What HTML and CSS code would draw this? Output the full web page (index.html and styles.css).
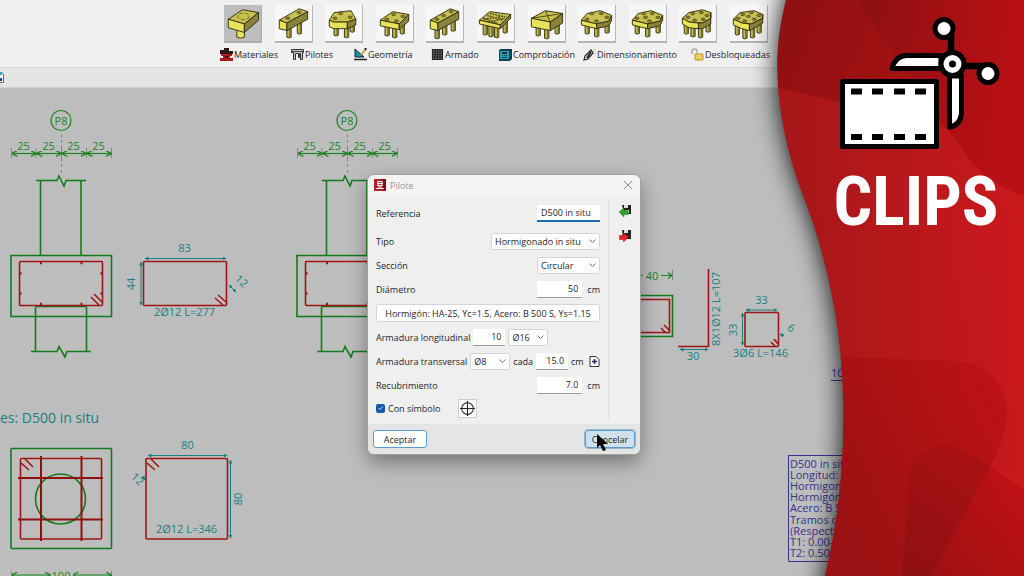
FILE: index.html
```html
<!DOCTYPE html>
<html lang="es">
<head>
<meta charset="utf-8">
<title>Pilote</title>
<link rel="stylesheet" href="styles.css">
</head>
<body>
<svg class="defs" aria-hidden="true">
  <defs>
    <g id="leg"><path class="side" d="M0 0h4.500v12q-2.200 1.500-4.500 0z"/><path class="shade" d="M2.500 0h2v12l-2 .5z"/></g>
    <g id="hole"><ellipse class="hole" rx="2.200" ry="1.300"/></g>
    <g id="cap-beam"><path class="top" d="M4 16L25 4l9 3-22 12z"/><path class="front" d="M4 16l8 3v8l-8-2z"/><path class="side" d="M12 19L34 7v8L12 27z"/></g>
    <g id="cap-box"><path class="top" d="M4 16L17 7l17 3-10 10z"/><path class="front" d="M4 16l20 4v6L4 22z"/><path class="side" d="M24 20l10-10v7L24 26z"/></g>
    <g id="cap-poly"><path class="top" d="M3 16l6-7 14-3 12 5-3 6-13 3z"/><path class="front" d="M3 16l16 4v5L3 21z"/><path class="side" d="M19 20l13-3 3-6v5l-3 6-13 3z"/></g>
  </defs>
</svg>

<div class="app">
  <header class="ribbon">
    <div class="caps">
      <button class="cap active" aria-label="Encepado de 1 pilote"><svg viewBox="0 0 38 38"><path class="front" d="M13 25v9q4 2 8 0v-9z"/><path class="top" d="M4 15L19 5l17 3-15 12z"/><path class="front" d="M4 15l17 5v9L4 24z"/><path class="side" d="M21 20L36 8v8L21 29z"/><ellipse class="ring" cx="20" cy="12" rx="6" ry="3.500"/></svg></button>
      <button class="cap" aria-label="Encepado de 2 pilotes"><svg viewBox="0 0 38 38"><use href="#leg" x="12" y="22"/><use href="#leg" x="23" y="18"/><use href="#cap-beam"/><use href="#hole" x="13" y="14"/><use href="#hole" x="25" y="8"/></svg></button>
      <button class="cap" aria-label="Encepado de 3 pilotes"><svg viewBox="0 0 38 38"><use href="#leg" x="9" y="20"/><use href="#leg" x="20" y="22"/><use href="#leg" x="26" y="16"/><path class="top" d="M4 16l5-8 18-2 5 9-9 3H9z"/><path class="front" d="M4 16l5 2h14v7H9l-5-2z"/><path class="side" d="M23 18l9-3v6l-9 4z"/><use href="#hole" x="10" y="14"/><use href="#hole" x="16" y="9"/><use href="#hole" x="26" y="13"/></svg></button>
      <button class="cap" aria-label="Encepado de 4 pilotes"><svg viewBox="0 0 38 38"><use href="#leg" x="9" y="20"/><use href="#leg" x="17" y="22"/><use href="#leg" x="25" y="18"/><use href="#cap-box"/><use href="#hole" x="11" y="15"/><use href="#hole" x="18" y="10"/><use href="#hole" x="28" y="12"/><use href="#hole" x="21" y="17"/></svg></button>
      <button class="cap" aria-label="Encepado lineal de 3 pilotes"><svg viewBox="0 0 38 38"><use href="#leg" x="9" y="23"/><use href="#leg" x="17" y="19"/><use href="#leg" x="26" y="15"/><use href="#cap-beam"/><use href="#hole" x="11" y="15"/><use href="#hole" x="18" y="11"/><use href="#hole" x="26" y="7"/></svg></button>
      <button class="cap" aria-label="Encepado en retícula"><svg viewBox="0 0 38 38"><use href="#leg" x="6" y="19"/><use href="#leg" x="12" y="21"/><use href="#leg" x="18" y="22"/><use href="#leg" x="27" y="17"/><path class="top" d="M2 16L13 7l22 3-11 11z"/><path class="front" d="M2 16l22 5v4L2 20z"/><path class="side" d="M24 21l11-11v4L24 25z"/><path class="grid" d="M7 15l21-3M11 18l18-4M6 14l15 5M10 11l17 5M13 9l18 4"/></svg></button>
      <button class="cap" aria-label="Encepado de 4 pilotes con diagonales"><svg viewBox="0 0 38 38"><use href="#leg" x="8" y="20"/><use href="#leg" x="17" y="23"/><use href="#leg" x="28" y="18"/><path class="top" d="M3 14L18 6l18 3-13 9z"/><path class="front" d="M3 14l20 4v9L3 23z"/><path class="side" d="M23 18l13-9v10l-13 8z"/><path class="thin" d="M3 14l33-5M18 6l5 12"/></svg></button>
      <button class="cap" aria-label="Encepado de 5 pilotes"><svg viewBox="0 0 38 38"><use href="#leg" x="7" y="18"/><use href="#leg" x="17" y="21"/><use href="#leg" x="28" y="17"/><use href="#cap-poly"/><use href="#hole" x="9" y="15"/><use href="#hole" x="14" y="9"/><use href="#hole" x="24" y="9"/><use href="#hole" x="30" y="13"/><use href="#hole" x="19" y="17"/></svg></button>
      <button class="cap" aria-label="Encepado de 6 pilotes"><svg viewBox="0 0 38 38"><use href="#leg" x="6" y="18"/><use href="#leg" x="17" y="21"/><use href="#leg" x="28" y="17"/><use href="#cap-poly"/><use href="#hole" x="8" y="14"/><use href="#hole" x="15" y="9"/><use href="#hole" x="24" y="9"/><use href="#hole" x="30" y="13"/><use href="#hole" x="21" y="17"/><use href="#hole" x="17" y="13"/></svg></button>
      <button class="cap" aria-label="Encepado de 7 pilotes"><svg viewBox="0 0 38 38"><use href="#leg" x="5" y="18"/><use href="#leg" x="12" y="21"/><use href="#leg" x="20" y="22"/><use href="#leg" x="28" y="16"/><path class="top" d="M3 14l7-6 14-3 9 3v6l-9 5-14-1z"/><path class="front" d="M3 14l7 4 10 1v6l-10-1-7-4z"/><path class="side" d="M20 19h4l9-5V8v12l-9 5h-4z"/><use href="#hole" x="9" y="13"/><use href="#hole" x="14" y="9"/><use href="#hole" x="23" y="8"/><use href="#hole" x="29" y="11"/><use href="#hole" x="25" y="15"/><use href="#hole" x="16" y="16"/></svg></button>
      <button class="cap" aria-label="Encepado de 8 pilotes"><svg viewBox="0 0 38 38"><use href="#leg" x="5" y="19"/><use href="#leg" x="13" y="23"/><use href="#leg" x="21" y="22"/><use href="#leg" x="28" y="17"/><path class="top" d="M3 15l7-7 15-2 9 4v4l-12 6-10-1z"/><path class="front" d="M3 15l9 4 8 1v7l-8-2-9-4z"/><path class="side" d="M20 20h2l12-6v-4 9l-12 7-2 1z"/><use href="#hole" x="8" y="14"/><use href="#hole" x="13" y="10"/><use href="#hole" x="22" y="8"/><use href="#hole" x="30" y="11"/><use href="#hole" x="25" y="15"/><use href="#hole" x="15" y="17"/><use href="#hole" x="19" y="12"/></svg></button>
    </div>
    <nav class="tabs">
      <button class="tab"><svg viewBox="0 0 13 13"><path fill="#2a1716" d="M4 0h5v3h4v3H0V2h4z"/><path fill="#a81a20" d="M1 6h11v2h-2v2h3v3H0v-3h3V8H1z"/><path fill="#401010" d="M5 8h3v2H5z"/></svg>Materiales</button>
      <button class="tab"><svg viewBox="0 0 13 13"><path fill="#c8c8c8" stroke="#333" d="M.5 1.500h12v3h-1v7h-2v-6h-1v4h-1v-4h-3v6h-2v-7h-2z"/><path stroke="#444" d="M1 3.500h11"/></svg>Pilotes</button>
      <button class="tab"><svg viewBox="0 0 13 13"><path fill="#159a9c" stroke="#124" d="M1 1v8h9z"/><path stroke="#222" stroke-width="1.500" d="M0 11.500h13"/><path stroke="#c5a529" stroke-width="2" d="M7 7l4-5"/><path stroke="#222" stroke-width="2" d="M11 2l1-2"/></svg>Geometría</button>
      <button class="tab"><svg viewBox="0 0 13 13"><path fill="#777" d="M1 1h11v11H1z"/><path fill="none" stroke="#222" stroke-width="1.200" d="M1.500 1.500h10v10h-10zM4 1v11M6.500 1v11M9 1v11M1 4h11M1 6.500h11M1 9h11"/></svg>Armado</button>
      <button class="tab"><svg viewBox="0 0 13 13"><path fill="#143f50" d="M2 1h11v10l-2 2H0V2z"/><path fill="#22a4b4" d="M1 3h9v8H1z"/><path fill="#163e48" d="M3 4h5v2H3zM3 7h1v1H3zM5 7h1v1H5zM7 7h1v1H7zM3 9h5v1H3z"/></svg>Comprobación</button>
      <button class="tab"><svg viewBox="0 0 13 13"><path fill="#eee" stroke="#222" stroke-width="1.200" d="M1 12l1-4 6-6 2 3-5 6z"/><path stroke="#222" stroke-width="2" d="M4 10l4-6"/><path stroke="#e8a75a" d="M10 4l2-3M11 6l2-1"/></svg>Dimensionamiento</button>
      <button class="tab"><svg viewBox="0 0 13 13"><path fill="none" stroke="#aaa" stroke-width="1.500" d="M1 6V3q0-2 2.500-2T6 3v3"/><path fill="#e9bd40" stroke="#c99a35" d="M4 6h8v6H4z"/><path stroke="#fae08a" d="M5 8h6M5 10h6"/></svg>Desbloqueadas</button>
    </nav>
  </header>
  <div class="strip"><svg viewBox="0 0 5 13"><path fill="#fff" stroke="#666" d="M-5 1.500h7l1.500 2v8H-5z"/><path fill="#28a5bb" d="M0 1h2v3H0z"/><path fill="#1740a0" d="M0 7h2v3H0z"/></svg></div>

  <main class="canvas">
    <svg class="drawing" viewBox="0 88 1024 488" preserveAspectRatio="xMinYMin slice">
      <defs>
        <marker id="arrow-g" viewBox="0 0 6 6" refX="5.500" refY="3" markerWidth="6" markerHeight="6" markerUnits="userSpaceOnUse" orient="auto-start-reverse"><path d="M0 0l6 3-6 3" fill="none" stroke="#17861f" stroke-width="1.300"/></marker>
        <marker id="arrow-t" viewBox="0 0 4 4" refX="3.500" refY="2" markerWidth="4" markerHeight="4" markerUnits="userSpaceOnUse" orient="auto-start-reverse"><path d="M0 0l4 2-4 2z" fill="#178082"/></marker>
        <g id="elevation">
          <circle class="gl" cx="61" cy="120.500" r="10"/>
          <text class="gt p8" x="61" y="125">P8</text>
          <path class="axis" d="M61.500 134V176"/>
          <path class="tick" d="M11.500 148v10M36 148v10M61.500 148v10M86.500 148v10M111.500 148v10"/>
          <g class="gl arrows"><path d="M12 153.500H36"/><path d="M37 153.500H61"/><path d="M62 153.500H86"/><path d="M87 153.500H111"/></g>
          <g class="gt"><text x="23.500" y="150">25</text><text x="48.500" y="150">25</text><text x="73.500" y="150">25</text><text x="98.500" y="150">25</text></g>
          <path class="g" d="M36 180.500H57L59 176L64 186L66 180.500H86M40.500 181V255M81 181V255"/>
          <path class="g" d="M11 255.500H111.500V316.500H11zM35.500 307V351M86.500 307V351M35.500 306.500H86.500M31 351.500H57L59 346.500L65 357L67 351.500H91"/>
          <rect class="r" x="19.500" y="261.500" width="83" height="44" rx="1"/>
          <path class="r" d="M91 297l8 8M94 294l8 8"/>
          <path class="dot" d="M40 263h2M80.500 263h2M40 304h2M80.500 304h2M20 273.500h1.500M20 293.500h1.500M100.500 273.500h1.500M100.500 293.500h1.500"/>
        </g>
      </defs>
      <use href="#elevation"/>
      <use href="#elevation" x="286"/>

      <rect class="r" x="143.500" y="261.500" width="83" height="44" rx="1"/>
      <path class="r" d="M215 298l8 7M218 295l8 7"/>
      <g class="tl"><path d="M145 258.500H226"/><path d="M141 262V305"/><path d="M229 285L236 292"/></g>
      <g class="tt">
        <text x="184.500" y="252">83</text>
        <text transform="translate(135 284) rotate(-90)">44</text>
        <text transform="translate(239 284) rotate(42)">12</text>
        <text x="184.500" y="316">2Ø12 L=277</text>
      </g>

      <text class="caption" x="0" y="423">es: D500 in situ</text>
      <rect class="g" x="11" y="448.500" width="100.500" height="100" rx="1"/>
      <circle class="g" cx="60.500" cy="499" r="25"/>
      <rect class="r" x="20.500" y="458.500" width="81" height="80.500" rx="1"/>
      <path class="r thick" d="M41 456V541M81.500 456V541M18 478H103M18 519.500H103"/>
      <path class="r" d="M21 463l8 7M25 459l8 8"/>
      <path class="tick" d="M11.500 571v5M111.500 571v5"/>
      <g class="gl arrows"><path d="M50 575H12"/><path d="M73 575H111"/></g>
      <text class="gt" x="61" y="580">100</text>

      <rect class="r" x="146" y="458.500" width="81.500" height="80.500" rx="1"/>
      <path class="r" d="M147 463l8 7M151 459l8 8"/>
      <g class="tl"><path d="M148 455.500H227"/><path d="M230.500 460V538"/><path d="M143 477L145 479"/></g>
      <g class="tt">
        <text x="187.500" y="449">80</text>
        <text transform="translate(242 499) rotate(-90)">80</text>
        <text transform="translate(135 482) rotate(42)">12</text>
        <text x="186.500" y="533">2Ø12 L=346</text>
      </g>

      <path class="tick" d="M672.500 270v10"/>
      <path class="gl" d="M630 275.500h13M661 275.500h11M668 272.500l4 3-4 3"/>
      <text class="gt" x="652" y="280">40</text>
      <path class="g" d="M620 295.500H672.500V336.500H620"/>
      <path class="r" d="M620 299.500H669.500V332.500H620M661 328l5 5M664 325l5 5"/>
      <path class="r" d="M708.500 269V346.500H678"/>
      <rect class="r" x="745" y="312.500" width="33.500" height="34" rx="1"/>
      <path class="r" d="M771 342l4 4M774 339l4 5"/>
      <g class="tl"><path d="M680 349.500H708"/><path d="M746 310H777"/><path d="M742.500 313V345"/><path d="M781 334L783 336"/></g>
      <g class="tt">
        <text x="693" y="360">30</text>
        <text transform="translate(720 309) rotate(-90)">8X1Ø12 L=107</text>
        <text x="761.500" y="304">33</text>
        <text transform="translate(737 330) rotate(-90)">33</text>
        <text transform="translate(789 331) rotate(35)">6</text>
        <text x="760.500" y="357">3Ø6 L=146</text>
      </g>
      <g class="note">
        <text x="831" y="377">10</text><path d="M831 380.500H860"/>
        <path d="M860 455.500H788.500V561.500H860"/>
        <text x="790" y="468">D500 in situ</text>
        <text x="790" y="479">Longitud:</text>
        <text x="790" y="490">Hormigon</text>
        <text x="790" y="501">Hormigón</text>
        <text x="790" y="512">Acero: B 5</text>
        <text x="790" y="524">Tramos d</text>
        <text x="790" y="535">(Respect</text>
        <text x="790" y="546">T1: 0.00-</text>
        <text x="790" y="557">T2: 0.50-</text>
      </g>
    </svg>
  </main>
</div>

<form class="dialog" role="dialog" aria-labelledby="dlg-title">
  <div class="titlebar">
    <svg class="logo" viewBox="0 0 12 12"><path fill="#b3202a" d="M0 0h12v12H0z"/><path fill="#7c1219" d="M7 0h5v12H9z"/><path fill="none" stroke="#eee" d="M3.500 2.500h5M3 4.500h6M3.500 6.500h5M2 9.500h8M4 2v5M8 2v5M5 7v2M7 7v2"/></svg>
    <h1 id="dlg-title">Pilote</h1>
    <button type="button" class="close" aria-label="Cerrar"><svg viewBox="0 0 8 8"><path d="M0 0l8 8M8 0l-8 8"/></svg></button>
  </div>
  <div class="body">
    <div class="fields">
      <div class="row first"><label for="ref">Referencia</label><input id="ref" class="w-m text focus push" value="D500 in situ"></div>
      <div class="row"><label for="tipo">Tipo</label><select id="tipo" class="w-l push"><option>Hormigonado in situ</option></select></div>
      <div class="row"><label for="sec">Sección</label><select id="sec" class="w-m push"><option>Circular</option></select></div>
      <div class="row"><label for="dia">Diámetro</label><input id="dia" class="w-s push" value="50"><span>cm</span></div>
      <div class="row"><button type="button" class="material">Hormigón: HA-25, Yc=1.5, Acero: B 500 S, Ys=1.15</button></div>
      <div class="row tight"><label for="lon">Armadura longitudinal</label><input id="lon" class="w-xs" value="10"><select class="w-xm" aria-label="Diámetro longitudinal"><option>Ø16</option></select></div>
      <div class="row tight"><label for="tra">Armadura transversal</label><select id="tra" class="w-xm"><option>Ø8</option></select><label for="cada">cada</label><input id="cada" class="w-xs" value="15.0"><span>cm</span><button type="button" class="plain push" aria-label="Añadir"><svg viewBox="0 0 11 11"><path fill="#fff" stroke="#333" d="M1 .5h6l3 3v7H1z"/><path stroke="#226" stroke-width="1.500" d="M5.500 3v5M3 5.500h5"/></svg></button></div>
      <div class="row"><label for="rec">Recubrimiento</label><input id="rec" class="w-s push" value="7.0"><span>cm</span></div>
      <div class="row last"><label class="check"><input type="checkbox" checked>Con símbolo</label><button type="button" class="symbol" aria-label="Símbolo"><svg viewBox="0 0 16 16"><circle cx="8" cy="8" r="5.500"/><path d="M8 1v14M1 8h14"/></svg></button></div>
    </div>
    <div class="side-tools">
      <button type="button" class="plain" aria-label="Importar"><svg viewBox="0 0 14 14"><path fill="#222" d="M4 1h9v9H6z"/><path fill="#ddd" d="M6 1h4v3H6zM7 6h4v3H7z"/><path fill="#2ba52b" stroke="#157515" stroke-width=".5" d="M1 8l5-4v2.500h4v4H6V13z"/></svg></button>
      <button type="button" class="plain" aria-label="Exportar"><svg viewBox="0 0 14 14"><path fill="#222" d="M4 1h9v9H5z"/><path fill="#ddd" d="M6 1h4v3H6z"/><path fill="#e32222" stroke="#a01515" stroke-width=".5" d="M10.500 8l-5-4v2.500h-4v4h4V13z"/></svg></button>
    </div>
  </div>
  <div class="footer"><button type="button" class="btn">Aceptar</button><button type="button" class="btn hover">Cancelar</button></div>
  <svg class="cursor" viewBox="0 0 12 18"><path d="M1 0v14l3-3 3 6 3-1-3-6h5z"/></svg>
</form>

<aside class="promo">
  <svg class="wave" viewBox="776 0 248 576" preserveAspectRatio="none" aria-hidden="true">
    <defs>
      <linearGradient id="base" gradientUnits="userSpaceOnUse" x1="780" x2="1024" y1="250" y2="240"><stop offset="0" stop-color="#a41719"/><stop offset="1" stop-color="#ca191d"/></linearGradient>
      <linearGradient id="dark" gradientUnits="userSpaceOnUse" x1="860" x2="1024" y1="0" y2="30"><stop offset="0" stop-color="#8c1012"/><stop offset="1" stop-color="#b91015"/></linearGradient>
      <linearGradient id="left" gradientUnits="userSpaceOnUse" x1="780" x2="940" y1="0" y2="60"><stop offset="0" stop-color="#8c1012"/><stop offset="1" stop-color="#a91214"/></linearGradient>
      <linearGradient id="low" gradientUnits="userSpaceOnUse" x1="835" x2="1010" y1="480" y2="400"><stop offset="0" stop-color="#9c1113"/><stop offset="1" stop-color="#bd1216"/></linearGradient>
      <linearGradient id="corner" gradientUnits="userSpaceOnUse" x1="930" x2="1024" y1="576" y2="500"><stop offset="0" stop-color="#9d1113"/><stop offset="1" stop-color="#bd1115"/></linearGradient>
      <linearGradient id="petal" gradientUnits="userSpaceOnUse" x1="910" x2="985" y1="576" y2="460"><stop offset="0" stop-color="#8f1012"/><stop offset="1" stop-color="#a91114"/></linearGradient>
      <path id="edge" d="M1050 -30H796L786 0C780 25 777 45 777.500 70C778 105 784 135 793 167C799 186 806 203 812 220C832 280 843.500 345 843.500 415C843.500 480 836 530 825 576L817 610H1050z"/>
      <clipPath id="inside"><use href="#edge"/></clipPath>
      <filter id="blur" filterUnits="userSpaceOnUse" x="680" y="-40" width="400" height="660"><feGaussianBlur stdDeviation="13"/></filter>
    </defs>
    <use href="#edge" filter="url(#blur)" opacity=".95"/>
    <g clip-path="url(#inside)">
      <path fill="url(#base)" d="M770 0h254v576H770z"/>
      <path fill="url(#left)" d="M770 0h90l90 130-10-5-100-23-70-16z"/>
      <path fill="url(#dark)" d="M857 0h167v195q-25-5-50-30l-34-45-29-42z"/>
      <path fill="url(#low)" d="M820 356l133 5C985 362 1007 385 1007 410C1007 432 1000 447 990 467L931 576H800z"/>
      <path fill="url(#corner)" d="M990 467l34 22v87h-93z"/>
      <path fill="url(#petal)" d="M902 576L909 480C912 455 930 445 945 445C960 445 972 454 990 467L931 576z"/>
    </g>
  </svg>
  <svg class="clip-icon" viewBox="838 14 164 138" aria-hidden="true">
    <g stroke="#000" stroke-width="5" fill="#fff" stroke-linejoin="round">
      <path d="M842.500 81.500h94v65h-94z"/>
      <path stroke-width="6.500" d="M951 30v25M963 66h25" />
      <circle cx="944" cy="28.500" r="9"/><circle cx="988" cy="73.500" r="9"/>
      <path d="M941 55.500h-35q-11 1-14 13h49z"/><path d="M949.500 76v51q10-1 12-13V76z"/>
      <circle cx="952.500" cy="64" r="11.500"/>
    </g>
    <circle cx="952.500" cy="64" r="3.500"/>
    <path d="M851 88.500h11v6h-11zM872 88.500h11v6h-11zM894 88.500h11v6h-11zM915 88.500h11v6h-11zM851 134h11v6h-11zM872 134h11v6h-11zM894 134h11v6h-11zM915 134h11v6h-11z"/>
  </svg>
  <h2>CLIPS</h2>
</aside>
</body>
</html>
```
FILE: styles.css
```css
* { box-sizing: border-box; }
body {
  margin: 0;
  position: relative;
  min-height: 100vh;
  overflow: hidden;
  font-family: "Open Sans", "Noto Sans", sans-serif;
  font-size: 9px;
  color: #262626;
}
button, input, select { font: inherit; color: inherit; margin: 0; }
button { padding: 0; border: 0; background: none; }
svg { display: block; }
.defs { position: absolute; width: 0; height: 0; }

.app { display: flex; flex-direction: column; min-height: 100vh; }
.ribbon { padding: 5px 0 5px 220px; background: #f0f0f0; border-bottom: 1px solid #d6d6d6; }
.caps { display: flex; justify-content: space-between; width: 544px; margin-left: 4px; }
.cap { width: 38px; height: 38px; background: #f7f7f7; border-right: 1px solid #b5b5b5; border-bottom: 2px solid #b5b5b5; }
.cap.active { background: #bdbdbd; border-color: #adadad; }
.cap svg { width: 100%; height: 100%; }
.top, .front, .side, .shade { stroke: #33300f; stroke-linejoin: round; }
.top { fill: #c9c052; }
.front { fill: #ebe25c; }
.side { fill: #88823a; }
#leg .side { fill: #c2ba50; }
.shade { fill: #77712f; stroke: none; }
.hole { fill: #857c35; stroke: #4a4418; stroke-width: .7; }
.ring { fill: none; stroke: #68622c; stroke-dasharray: 4 2; }
.grid { fill: none; stroke: #57511d; stroke-width: 1.5; stroke-dasharray: 2 1; }
.thin { fill: none; stroke: #33300f; stroke-width: .8; }
.tabs { display: grid; grid-template-columns: 71px 63px 77px 68px 84px 108px auto; justify-content: start; margin-top: 4px; }
.tab { display: flex; align-items: center; gap: 1px; height: 15px; white-space: nowrap; }
.tab svg { width: 13px; height: 13px; fill: none; }
.strip { display: flex; align-items: center; height: 20px; background: #e4e4e4; border-bottom: 1px solid #d0d0d0; }
.strip svg { width: 5px; height: 13px; }

.canvas { flex: 1; position: relative; background: #bdbdbd; }
.drawing { position: absolute; width: 100%; height: 100%; }
.g, .r, .gl, .tl { fill: none; }
.g { stroke: #137b1c; stroke-width: 1.6; }
.gl { stroke: #17861f; stroke-width: 1.2; }
.r { stroke: #a01414; stroke-width: 1.6; }
.thick { stroke: #8e1010; stroke-width: 2; }
.dot { stroke: #a01414; stroke-width: 2.5; }
.tl { stroke: #178082; }
.tl path { marker-start: url(#arrow-t); marker-end: url(#arrow-t); }
.arrows path { marker-start: url(#arrow-g); marker-end: url(#arrow-g); }
.tick { stroke: #858585; }
.axis { stroke: #858585; stroke-dasharray: 3 3; }
.gt, .tt { font-size: 11px; text-anchor: middle; }
.gt { fill: #17861f; }
.tt { fill: #178082; }
.caption { font-size: 14px; fill: #178082; }
.note { font-size: 11px; fill: #34348a; }
.note path { fill: none; stroke: #34348a; }

.dialog {
  position: absolute;
  left: 368px;
  top: 175px;
  width: 272px;
  border-radius: 6px;
  background: #efefef;
  box-shadow: 0 0 0 1px #a0a0a0, 0 8px 20px rgba(0, 0, 0, .4);
}
.titlebar { display: flex; align-items: center; gap: 4px; height: 20px; padding: 0 8px 0 6px; background: #f4f4f4; border-radius: 6px 6px 0 0; }
.logo { width: 12px; height: 12px; }
h1 { margin: 0; font-size: 9px; font-weight: 400; color: #999; }
.close { margin-left: auto; }
.close svg { width: 8px; height: 8px; stroke: #888; }
.body { display: flex; padding: 6px 7px 5px 8px; }
.fields { flex: 1; min-width: 0; padding-right: 8px; border-right: 1px solid #dedede; }
.row { display: flex; align-items: center; gap: 5px; height: 24px; white-space: nowrap; }
.row.tight { gap: 3px; }
.row.last { height: 22px; }
.first { margin-bottom: 4px; }
.push { margin-left: auto; }
input:not([type]) { height: 17px; padding: 0 4px; border: 0; border-bottom: 1px solid #9a9a9a; background: #fff; text-align: right; }
input.text:not([type]) { text-align: left; }
input.focus:not([type]) { border-bottom: 2px solid #1a6bb0; }
select {
  height: 17px;
  padding: 0 3px;
  border: 1px solid #d5d5d5;
  border-radius: 2px;
  appearance: none;
  background: #fff url("data:image/svg+xml,%3Csvg xmlns='http://www.w3.org/2000/svg' width='7' height='5'%3E%3Cpath d='M.5 .5l3 3 3-3' fill='none' stroke='%23777'/%3E%3C/svg%3E") no-repeat right 3px center;
}
.w-xs { width: 32px; }
.w-xm { width: 40px; }
.w-s { width: 45px; }
.w-m { width: 63px; }
.w-l { width: 109px; }
.material { flex: 1; height: 18px; background: #fff; border: 1px solid #d5d5d5; border-radius: 2px; }
.plain svg { width: 14px; height: 14px; }
.row .plain svg { width: 11px; height: 11px; }
.check { display: flex; align-items: center; gap: 3px; width: 77px; }
.check input {
  width: 9px;
  height: 9px;
  appearance: none;
  border-radius: 2px;
  background: #145ca8 url("data:image/svg+xml,%3Csvg xmlns='http://www.w3.org/2000/svg' width='5' height='4'%3E%3Cpath d='M.5 2l1.500 1.500 3-3' fill='none' stroke='%23fff' stroke-width='.8'/%3E%3C/svg%3E") no-repeat center;
}
.symbol { width: 19px; height: 19px; background: #fff; border: 1px solid #ccc; }
.symbol svg { width: 17px; height: 17px; fill: none; stroke: #222; }
.side-tools { display: flex; flex: none; flex-direction: column; gap: 11px; width: 24px; padding: 3px 0 0 9px; }
.footer { display: flex; justify-content: space-between; padding: 6px 5px; background: #e5e5e5; border-radius: 0 0 6px 6px; }
.btn { width: 54px; height: 18px; background: #fff; border: 1px solid #5a9bc7; border-radius: 3px; }
.btn.hover { width: 50px; background: #cfe1ec; outline: 1px solid #90b8d0; }
.cursor { position: absolute; right: 32px; bottom: 2px; width: 12px; height: 18px; }

.promo {
  position: absolute;
  top: 0;
  right: 0;
  bottom: 0;
  width: 248px;
  padding: 14px 22px 0 62px;
}
.wave { position: absolute; inset: 0; width: 100%; height: 100%; overflow: visible; }
.clip-icon { position: relative; width: 100%; }
h2 {
  position: relative;
  margin: 10px 0 0 -8px;
  font-family: "Liberation Sans Narrow", "Roboto Condensed", Roboto, sans-serif;
  font-size: 68px;
  line-height: 80px;
  font-weight: 700;
  color: #fff;
  text-align: center;
}
```
